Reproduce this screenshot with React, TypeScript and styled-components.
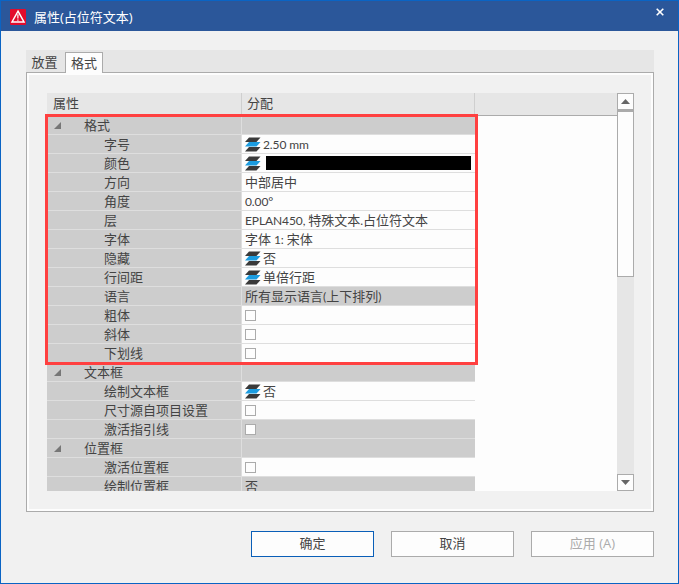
import React from "react";
import styled, { createGlobalStyle } from "styled-components";

const Global = createGlobalStyle`
  html, body { margin: 0; padding: 0; background: #f1f1f1; }
  * { box-sizing: border-box; }
`;

const FONT = `"Open Sans", "Noto Sans CJK SC", sans-serif`;

const Window = styled.div`
  width: 679px;
  height: 584px;
  border: 1px solid #0a64c4;
  border-top-width: 0;
  background: #f1f1f1;
  font-family: ${FONT};
  font-size: 13px;
  color: #444;
  display: flex;
  flex-direction: column;
  position: relative;
  overflow: hidden;
`;

const TitleBar = styled.div`
  height: 31px;
  margin: 0 -1px;
  flex: none;
  background: #2b579a;
  border-top: 1px solid #0a64c4;
  display: flex;
  align-items: center;
  padding: 2px 0 0 10px;
  color: #fff;
  gap: 8px;
  font-size: 13px;
`;

const TitleText = styled.span`
  flex: 1;
  line-height: 18px;
`;

const CloseButton = styled.div`
  width: 20px;
  height: 20px;
  margin-right: 9px;
  margin-top: -11px;
  display: flex;
  align-items: center;
  justify-content: center;
`;

const Body = styled.div`
  flex: 1;
  padding: 19px 24px 0 25px;
  display: flex;
  flex-direction: column;
`;

const TabStrip = styled.div`
  height: 22px;
  background: #e6e6e6;
  display: flex;
  align-items: flex-end;
  flex: none;
`;

const Tab = styled.div<{ $active?: boolean }>`
  height: ${(p) => (p.$active ? "21px" : "20px")};
  width: ${(p) => (p.$active ? "38px" : "39px")};
  margin-bottom: ${(p) => (p.$active ? "-1px" : "0")};
  padding-bottom: 2px;
  padding-right: ${(p) => (p.$active ? "0" : "2px")};
  display: flex;
  align-items: center;
  justify-content: center;
  background: ${(p) => (p.$active ? "#fdfdfd" : "transparent")};
  border: ${(p) => (p.$active ? "1px solid #ababab" : "0")};
  border-bottom: 0;
  position: relative;
  z-index: 1;
`;

const Panel = styled.div`
  height: 440px;
  flex: none;
  border: 1px solid #ababab;
  box-shadow: inset 0 0 0 2px #fdfdfd;
  background: #f1f1f1;
  padding: 20px 19px 0 20px;
`;

const Grid = styled.div`
  height: 398px;
  display: flex;
  background: #fdfdfd;
`;

const Table = styled.div`
  width: 570px;
  display: flex;
  flex-direction: column;
  overflow: hidden;
`;

const HeaderRow = styled.div`
  height: 23px;
  flex: none;
  display: flex;
  background: #e6e6e6;
  border-bottom: 1px solid #ababab;
`;

const HeaderCell = styled.div<{ $w: number; $last?: boolean }>`
  width: ${(p) => p.$w}px;
  flex: ${(p) => (p.$last ? 1 : "none")};
  padding-left: ${(p) => (p.$w === 195 ? "6px" : "5px")};
  line-height: 21px;
  border-right: ${(p) => (p.$last ? "0" : "1px solid #cfcfcf")};
`;

const Rows = styled.div`
  flex: 1;
  overflow: hidden;
  width: 428px;
`;

const Row = styled.div`
  height: 19px;
  display: flex;
  border-bottom: 1px solid #dedede;
`;

const NameCell = styled.div<{ $section?: boolean }>`
  width: 195px;
  flex: none;
  background: #cdcdcd;
  border-right: 1px solid #dedede;
  display: flex;
  align-items: center;
  position: relative;
  padding-left: ${(p) => (p.$section ? "37px" : "57px")};
  line-height: 18px;
  white-space: nowrap;
`;

const ValueCell = styled.div<{ $gray?: boolean }>`
  flex: 1;
  background: ${(p) => (p.$gray ? "#cdcdcd" : "#fdfdfd")};
  display: flex;
  align-items: center;
  padding-left: 3px;
  font-size: 13px;
  white-space: pre;
  line-height: 18px;
`;

const Latin = styled.span`
  font-size: 12px;
  letter-spacing: -0.1px;
  font-family: "Lato", "Noto Sans CJK SC", sans-serif;
`;

const Expander = styled.svg`
  position: absolute;
  left: 7px;
  top: 6px;
`;

const Check = styled.div`
  width: 11px;
  height: 11px;
  border: 1px solid #ababab;
  background: #fdfdfd;
`;

const StackIcon = styled.svg`
  flex: none;
  margin-left: -1px;
  margin-right: 2px;
`;

const Swatch = styled.div`
  width: 205px;
  height: 14px;
  background: #000;
  margin-left: 3px;
`;

const Scrollbar = styled.div`
  width: 17px;
  flex: none;
  background: #e6e6e6;
  display: flex;
  flex-direction: column;
`;

const ScrollButton = styled.div`
  height: 17px;
  flex: none;
  background: #fdfdfd;
  border: 1px solid #ababab;
  display: flex;
  align-items: center;
  justify-content: center;
`;

const Thumb = styled.div`
  height: 167px;
  flex: none;
  background: #fdfdfd;
  border: 1px solid #ababab;
  border-top-width: 2px;
`;

const Track = styled.div`
  flex: 1;
`;

const Footer = styled.div`
  display: flex;
  justify-content: flex-end;
  gap: 17px;
  margin-top: 19px;
`;

const Button = styled.div<{ $primary?: boolean; $disabled?: boolean }>`
  width: 123px;
  height: 26px;
  padding-bottom: 3px;
  background: #fdfdfd;
  border: 1px solid ${(p) => (p.$primary ? "#0a5fb8" : "#ababab")};
  color: ${(p) => (p.$disabled ? "#ababab" : "#444")};
  display: flex;
  align-items: center;
  justify-content: center;
  font-size: 13px;
`;

const Highlight = styled.div`
  position: absolute;
  left: 44px;
  top: 114px;
  width: 433px;
  height: 251px;
  border: 3px solid #ff4040;
  pointer-events: none;
  z-index: 2;
`;

const Stack = () => (
  <StackIcon width="17" height="15" viewBox="0 0 17 15">
    <path d="M5 0.5H16.5L12.5 5H1Z" fill="#3a3a3a" />
    <path d="M5 5H16.5L12.5 9.5H1Z" fill="#1b9ce0" />
    <path d="M5 10H16.5L12.5 14.5H1Z" fill="#3a3a3a" />
  </StackIcon>
);

const AppIcon = () => (
  <svg width="16" height="16" viewBox="0 0 16 16" style={{ flex: "none" }}>
    <rect width="16" height="16" rx="1" fill="#e30b2c" />
    <path d="M8 2.2L14 13H2Z" fill="none" stroke="#fff" strokeWidth="1.5" />
    <path d="M7.9 5.2V9.6M7.9 10.4V11.8" stroke="#fff" strokeWidth="1.2" />
  </svg>
);

const ValueText = ({ text }: { text: string }) => (
  <span>
    {text.split(/([\x20-\x7e°]+)/).map((part, i) =>
      /^[\x20-\x7e°]+$/.test(part) ? <Latin key={i}>{part}</Latin> : part
    )}
  </span>
);

type RowData = {
  name: string;
  section?: boolean;
  gray?: boolean;
  kind?: "stack" | "check" | "swatch";
  value?: string;
};

const rows: RowData[] = [
  { name: "格式", section: true, gray: true },
  { name: "字号", kind: "stack", value: "2.50 mm" },
  { name: "颜色", kind: "swatch" },
  { name: "方向", value: "中部居中" },
  { name: "角度", value: "0.00°" },
  { name: "层", value: "EPLAN450, 特殊文本.占位符文本" },
  { name: "字体", value: "字体 1: 宋体" },
  { name: "隐藏", kind: "stack", value: "否" },
  { name: "行间距", kind: "stack", value: "单倍行距" },
  { name: "语言", gray: true, value: "所有显示语言(上下排列)" },
  { name: "粗体", kind: "check" },
  { name: "斜体", kind: "check" },
  { name: "下划线", kind: "check" },
  { name: "文本框", section: true, gray: true },
  { name: "绘制文本框", kind: "stack", value: "否" },
  { name: "尺寸源自项目设置", kind: "check" },
  { name: "激活指引线", kind: "check", gray: true },
  { name: "位置框", section: true, gray: true },
  { name: "激活位置框", kind: "check" },
  { name: "绘制位置框", gray: true, value: "否" },
];

export default function App() {
  return (
    <Window>
      <Global />
      <TitleBar>
        <AppIcon />
        <TitleText>属性(占位符文本)</TitleText>
        <CloseButton>
          <svg width="8" height="8" viewBox="0 0 8 8">
            <path d="M0.7 0.7L7.3 7.3M7.3 0.7L0.7 7.3" stroke="#fff" strokeWidth="1.6" />
          </svg>
        </CloseButton>
      </TitleBar>
      <Body>
        <TabStrip>
          <Tab>放置</Tab>
          <Tab $active>格式</Tab>
        </TabStrip>
        <Panel>
          <Grid>
            <Table>
              <HeaderRow>
                <HeaderCell $w={195}>属性</HeaderCell>
                <HeaderCell $w={233}>分配</HeaderCell>
                <HeaderCell $w={142} $last />
              </HeaderRow>
              <Rows>
                {rows.map((r) => (
                  <Row key={r.name}>
                    <NameCell $section={r.section}>
                      {r.section && (
                        <Expander width="7" height="7" viewBox="0 0 7 7">
                          <path d="M7 0V7H0Z" fill="#777" />
                        </Expander>
                      )}
                      {r.name}
                    </NameCell>
                    <ValueCell $gray={r.gray}>
                      {r.kind === "stack" && <Stack />}
                      {r.kind === "swatch" && (
                        <>
                          <Stack />
                          <Swatch />
                        </>
                      )}
                      {r.kind === "check" && <Check />}
                      {r.value && <ValueText text={r.value} />}
                    </ValueCell>
                  </Row>
                ))}
              </Rows>
            </Table>
            <Scrollbar>
              <ScrollButton>
                <svg width="9" height="5" viewBox="0 0 9 5">
                  <path d="M4.5 0L9 5H0Z" fill="#666" />
                </svg>
              </ScrollButton>
              <Thumb />
              <Track />
              <ScrollButton>
                <svg width="9" height="5" viewBox="0 0 9 5">
                  <path d="M0 0H9L4.5 5Z" fill="#666" />
                </svg>
              </ScrollButton>
            </Scrollbar>
          </Grid>
        </Panel>
        <Footer>
          <Button $primary>确定</Button>
          <Button>取消</Button>
          <Button $disabled>应用 (A)</Button>
        </Footer>
      </Body>
      <Highlight />
    </Window>
  );
}
